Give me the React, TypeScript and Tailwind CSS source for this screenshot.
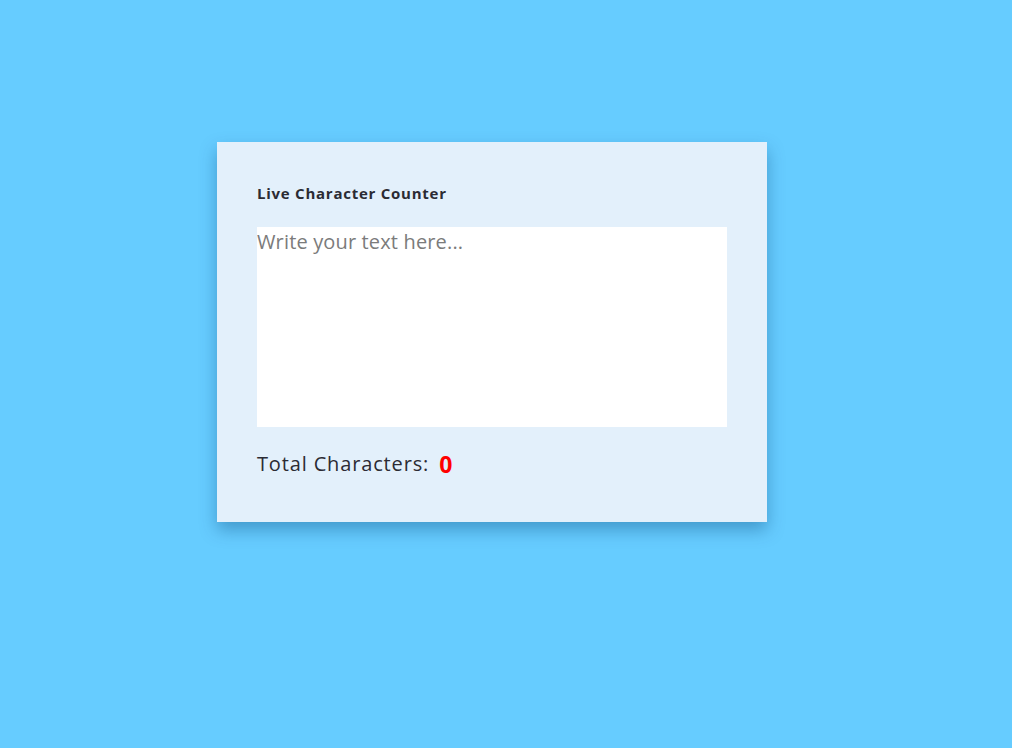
import { useState } from 'react';

export default function App() {
  const [text, setText] = useState('');

  return (
    <div className="min-h-screen w-full bg-[#66ccff] pl-[217px] pt-[142px]" style={{ fontFamily: '"Open Sans", "Noto Sans", sans-serif' }}>
      <div className="w-[550px] bg-[#e3f0fb] px-10 pt-10 pb-[43px] shadow-[0_8px_16px_rgba(0,60,110,0.35)]">
        <h1 className="text-[15px] font-bold leading-[22px] tracking-[0.75px] text-[#2b2b33]">Live Character Counter</h1>

        <textarea
          value={text}
          onChange={(e) => setText(e.target.value)}
          placeholder="Write your text here..."
          className="mt-[23px] block h-[200px] w-full resize-none bg-white text-[20px] leading-[30px] tracking-[0.15px] text-[#333] outline-none placeholder:text-[#7b7b7b]"
        />

        <div className="mt-[22px] flex items-center text-[20px] leading-[30px] tracking-[0.85px] text-[#2b2b33]">
          <span>Total Characters:</span>
          <span className="ml-[10px] text-[23px] font-bold text-[#ff0000]">{text.length}</span>
        </div>
      </div>
    </div>
  );
}
